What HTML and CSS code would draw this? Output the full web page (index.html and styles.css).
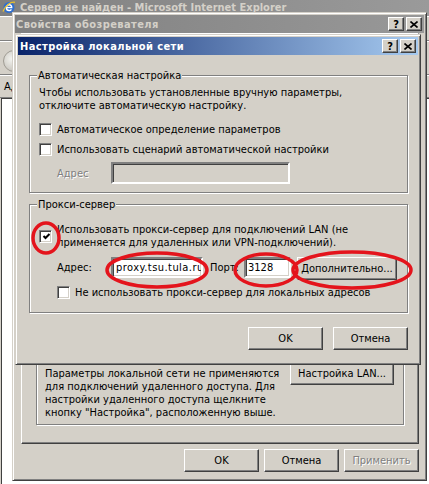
FILE: index.html
```html
<!DOCTYPE html>
<html>
<head>
    <title>Настройка локальной сети</title>
    <link rel="stylesheet" href="styles.css">
</head>
<body>
    <!-- Internet Explorer window behind the dialogs -->
    <div class="ie">
        <div class="ie-title">
            <svg class="ie-logo" width="14" height="14" viewBox="0 0 14 14">
                <circle cx="7" cy="7.5" r="5.5" fill="#2f6fd0"/>
                <path d="M4.4 7.6h5.3c0-1.7-1.1-2.8-2.6-2.8S4.4 6 4.4 7.7s1.1 2.8 2.7 2.8c1 0 1.8-.4 2.3-1.2" fill="none" stroke="#fff" stroke-width="1.4"/>
                <path d="M1 11.5C3 6 8.5 1.5 13 2.3" fill="none" stroke="#e8c030" stroke-width="1.3"/>
            </svg>
            <span>Сервер не найден - Microsoft Internet Explorer</span>
        </div>
        <div class="ie-menu"></div>
        <div class="ie-toolbar"><span class="ie-back"></span></div>
        <div class="ie-address">Адрес</div>
        <div class="ie-page"></div>
    </div>

    <!-- Свойства обозревателя -->
    <div class="window options">
        <div class="titlebar inactive">
            <span class="title">Свойства обозревателя</span>
            <span class="cap-btn">?</span>
            <span class="cap-btn close">
                <svg width="8" height="7" viewBox="0 0 8 7"><path d="M0.5 0.5L7.5 6.5M7.5 0.5L0.5 6.5" stroke="#000" stroke-width="1.6"/></svg>
            </span>
        </div>
        <div class="client options-client">
            <div class="tab-panel">
                <div class="lan-group">
                    <p class="note">Параметры локальной сети не применяются<br>для подключений удаленного доступа. Для<br>настройки удаленного доступа щелкните<br>кнопку "Настройка", расположенную выше.</p>
                    <button class="btn lan-btn">Настройка LAN...</button>
                </div>
            </div>
            <div class="btn-row">
                <button class="btn">OK</button>
                <button class="btn">Отмена</button>
                <button class="btn" disabled>Применить</button>
            </div>
        </div>
    </div>

    <!-- Настройка локальной сети -->
    <div class="window lan">
        <div class="titlebar">
            <span class="title">Настройка локальной сети</span>
            <span class="cap-btn">?</span>
            <span class="cap-btn close">
                <svg width="8" height="7" viewBox="0 0 8 7"><path d="M0.5 0.5L7.5 6.5M7.5 0.5L0.5 6.5" stroke="#000" stroke-width="1.6"/></svg>
            </span>
        </div>
        <div class="client lan-client">
            <fieldset class="group auto-group">
                <legend>Автоматическая настройка</legend>
                <p class="note">Чтобы использовать установленные вручную параметры,<br>отключите автоматическую настройку.</p>
                <div class="check-row detect"><span class="checkbox"></span>Автоматическое определение параметров</div>
                <div class="check-row script"><span class="checkbox"></span>Использовать сценарий автоматической настройки</div>
                <div class="field-row script-row">
                    <span class="field-label disabled">Адрес</span>
                    <span class="textbox off"></span>
                </div>
            </fieldset>

            <fieldset class="group proxy-group">
                <legend>Прокси-сервер</legend>
                <div class="check-row use-proxy">
                    <span class="checkbox">
                        <svg width="9" height="9" viewBox="0 0 9 9"><path d="M1.5 4L3.5 6L7.5 2" fill="none" stroke="#000" stroke-width="2"/></svg>
                    </span>
                    <span>Использовать прокси-сервер для подключений LAN (не<br>применяется для удаленных или VPN-подключений).</span>
                </div>
                <div class="field-row proxy-row">
                    <span class="field-label">Адрес:</span>
                    <span class="textbox addr">proxy.tsu.tula.ru</span>
                    <span class="port-label">Порт:</span>
                    <span class="textbox port">3128</span>
                    <button class="btn more-btn">Дополнительно...</button>
                </div>
                <div class="check-row bypass"><span class="checkbox"></span>Не использовать прокси-сервер для локальных адресов</div>
            </fieldset>

            <div class="btn-row">
                <button class="btn">OK</button>
                <button class="btn">Отмена</button>
            </div>
        </div>
    </div>

    <!-- red marks drawn over the screenshot -->
    <svg class="marks" width="429" height="484">
        <ellipse cx="46" cy="238" rx="13" ry="15"/>
        <ellipse cx="157" cy="270" rx="50" ry="17"/>
        <ellipse cx="266" cy="270" rx="31" ry="16"/>
        <ellipse cx="352" cy="270" rx="59" ry="18"/>
    </svg>
</body>
</html>
```

FILE: styles.css
```css
body {
    margin: 0;
    width: 429px;
    height: 484px;
    overflow: hidden;
    position: relative;
    font-family: "DejaVu Sans Condensed", "DejaVu Sans", sans-serif;
    font-stretch: condensed;
    font-size: 11px;
    color: #000;
    background-color: #d4d0c8;
}

/* IE window */
.ie {
    height: 100%;
    display: flex;
    flex-direction: column;
}
.ie-title {
    height: 18px;
    margin-top: -2px;
    flex-shrink: 0;
    display: flex;
    align-items: center;
    gap: 4px;
    padding-left: 2px;
    font-weight: bold;
    color: #d4d0c8;
    background: linear-gradient(90deg, #808080, #9a9a9a);
}
.ie-menu {
    height: 23px;
    border-top: 1px solid #fff;
    border-bottom: 1px solid #808080;
}
.ie-toolbar {
    height: 34px;
    border-top: 1px solid #fff;
    border-bottom: 1px solid #808080;
    padding: 8px 0 0 3px;
    box-sizing: border-box;
}
.ie-back {
    display: block;
    width: 20px;
    height: 20px;
    border-radius: 50%;
    background: radial-gradient(circle at 40% 40%, #f4f4f0, #b8b4ac);
    border: 1px solid #a09c94;
}
.ie-address {
    height: 21px;
    line-height: 21px;
    padding-left: 4px;
    border-top: 1px solid #fff;
    border-bottom: 1px solid #808080;
}
.ie-page {
    flex: 1;
    margin-left: 1px;
    background-color: #fff;
    border-left: 1px solid #404040;
    border-top: 1px solid #404040;
}

/* classic windows */
.window {
    position: absolute;
    box-sizing: border-box;
    display: flex;
    flex-direction: column;
    padding: 2px;
    background-color: #d4d0c8;
    border: 1px solid;
    border-color: #d4d0c8 #404040 #404040 #d4d0c8;
    box-shadow: inset 1px 1px 0 #fff, inset -1px -1px 0 #808080;
}
.options {
    left: 12px;
    top: 12px;
    width: 415px;
    height: 469px;
}
.lan {
    left: 15px;
    top: 34px;
    width: 406px;
    height: 331px;
}
.titlebar {
    height: 18px;
    flex-shrink: 0;
    display: flex;
    align-items: center;
    gap: 2px;
    padding: 0 2px;
    font-weight: bold;
    color: #fff;
    background: linear-gradient(90deg, #0a246a, #a6caf0);
}
.titlebar.inactive {
    padding-left: 1px;
    color: #d4d0c8;
    background: linear-gradient(90deg, #808080, #989898);
}
.titlebar .title {
    flex: 1;
    letter-spacing: 0.4px;
}
.cap-btn {
    width: 16px;
    height: 14px;
    box-sizing: border-box;
    display: flex;
    align-items: center;
    justify-content: center;
    color: #000;
    font-weight: bold;
    background-color: #d4d0c8;
    border: 1px solid;
    border-color: #fff #404040 #404040 #fff;
    box-shadow: inset -1px -1px 0 #808080;
}

.client {
    flex: 1;
    display: flex;
    flex-direction: column;
}
.lan-client {
    padding: 14px 10px 0 11px;
}
.options-client {
    padding: 0 5px 6px 6px;
}

/* etched group boxes */
.group {
    margin: 0;
    min-inline-size: 0;
    border: 1px solid #808080;
    box-shadow: inset 1px 1px 0 #fff, 1px 1px 0 #fff;
}
.group legend {
    padding: 0 1px;
    margin-left: -2px;
    line-height: 13px;
    background-color: #d4d0c8;
}
.auto-group {
    padding: 4px 9px 8px 9px;
}
.proxy-group {
    margin-top: 5px;
    padding: 12px 9px 13px 9px;
}
.note {
    margin: 0;
    line-height: 13px;
    white-space: nowrap;
}

.check-row {
    display: flex;
    align-items: center;
    gap: 5px;
    line-height: 13px;
    white-space: nowrap;
}
.detect {
    margin-top: 11px;
}
.script {
    margin-top: 7px;
}
.checkbox {
    width: 13px;
    height: 13px;
    flex-shrink: 0;
    box-sizing: border-box;
    display: flex;
    align-items: center;
    justify-content: center;
    background-color: #fff;
    border: 1px solid;
    border-color: #808080 #fff #fff #808080;
    box-shadow: inset 1px 1px 0 #404040, inset -1px -1px 0 #d4d0c8;
}
.checkbox svg {
    margin: 1px 0 0 1px;
}

.field-row {
    display: flex;
    align-items: center;
    white-space: nowrap;
}
.script-row {
    margin-top: 6px;
    padding-left: 18px;
}
.proxy-row {
    margin-top: 8px;
    padding-left: 18px;
    align-items: flex-start;
}
.proxy-row .field-label,
.proxy-row .port-label {
    line-height: 21px;
}
.field-label {
    width: 54px;
}
.port-label {
    width: 34px;
    margin-left: 7px;
}
.disabled {
    color: #808080;
    text-shadow: 1px 1px 0 #fff;
}
.textbox {
    height: 21px;
    box-sizing: border-box;
    overflow: hidden;
    padding: 0 3px;
    line-height: 17px;
    background-color: #fff;
    border: 2px solid;
    border-color: #808080 #fff #fff #808080;
    box-shadow: inset 1px 1px 0 #404040, inset -1px -1px 0 #d4d0c8;
}
.textbox.off {
    width: 179px;
    height: 22px;
    background-color: #d4d0c8;
}
.addr {
    width: 92px;
    letter-spacing: 0.45px;
}
.port {
    width: 47px;
    padding: 0 2px;
}
.bypass {
    margin-top: 6px;
    padding-left: 18px;
}

/* buttons */
.btn {
    width: 75px;
    height: 23px;
    padding: 0;
    font: inherit;
    font-stretch: condensed;
    color: #000;
    background-color: #d4d0c8;
    border: 1px solid;
    border-color: #fff #404040 #404040 #fff;
    box-shadow: inset -1px -1px 0 #808080;
    white-space: nowrap;
}
.btn:disabled {
    color: #808080;
    text-shadow: 1px 1px 0 #fff;
}
.more-btn {
    width: 100px;
    margin-left: 6px;
}
.btn-row {
    display: flex;
    justify-content: flex-end;
}
.lan-client .btn-row {
    margin-top: 14px;
    gap: 10px;
}
.options-client .btn-row {
    margin-top: 5px;
    gap: 5px;
}

/* Connections tab page */
.tab-panel {
    flex: 1;
    display: flex;
    flex-direction: column;
    justify-content: flex-end;
    padding: 0 14px 18px 14px;
    border: 1px solid;
    border-color: #fff #404040 #404040 #fff;
    box-shadow: inset -1px -1px 0 #808080;
}
.lan-group {
    display: flex;
    justify-content: space-between;
    align-items: flex-start;
    padding: 8px 9px 5px 8px;
    border: 1px solid #808080;
    box-shadow: inset 1px 1px 0 #fff, 1px 1px 0 #fff;
}
.lan-group .note {
    margin-top: 5px;
}
.lan-btn {
    width: 104px;
}

/* red hand marks */
.marks {
    position: absolute;
    left: 0;
    top: 0;
    pointer-events: none;
}
.marks ellipse {
    fill: none;
    stroke: #e4141c;
    stroke-width: 3.5;
}
```
